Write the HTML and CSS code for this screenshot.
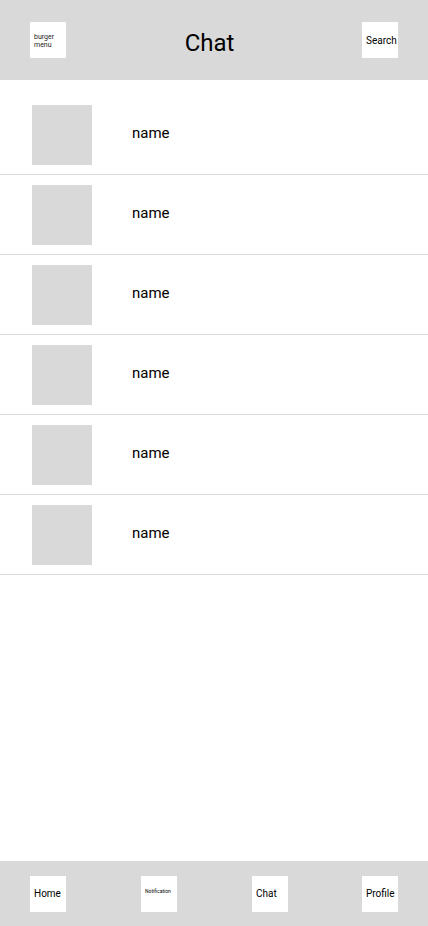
FILE: index.html
```html
<!DOCTYPE html>
<html>
<head>
<meta charset="utf-8">
<link rel="stylesheet" href="styles.css">
</head>
<body>
<div class="app">
  <header class="topbar">
    <div class="box burger">burger<br>menu</div>
    <h1 class="title">Chat</h1>
    <div class="box search">Search</div>
  </header>
  <main class="list">
    <div class="row"><div class="avatar"></div><span class="name">name</span></div>
    <div class="row"><div class="avatar"></div><span class="name">name</span></div>
    <div class="row"><div class="avatar"></div><span class="name">name</span></div>
    <div class="row"><div class="avatar"></div><span class="name">name</span></div>
    <div class="row"><div class="avatar"></div><span class="name">name</span></div>
    <div class="row"><div class="avatar"></div><span class="name">name</span></div>
  </main>
  <nav class="tabbar">
    <div class="box tab">Home</div>
    <div class="box tab notif">Notification</div>
    <div class="box tab">Chat</div>
    <div class="box tab last">Profile</div>
  </nav>
</div>
</body>
</html>
```
FILE: styles.css
```css
* { box-sizing: border-box; }
html, body { margin: 0; padding: 0; }
body { font-family: Roboto, "Noto Sans", sans-serif; color: #000; background: #fff; }
.app { width: 428px; height: 926px; display: flex; flex-direction: column; }
.topbar {
  height: 80px; background: #d9d9d9;
  display: flex; align-items: center; justify-content: space-between;
  padding: 0 30px;
}
.box {
  width: 36px; height: 36px; background: #fff; flex: none;
  display: flex; align-items: center; justify-content: flex-start;
  padding-left: 4px; white-space: nowrap;
}
.burger { font-size: 7px; line-height: 8px; padding-top: 2px; color: #222; }
.search { font-size: 10px; }
.title { margin: 6px 9px 0 0; font-weight: 400; font-size: 24px; line-height: 28px; }
.list { flex: 1; padding-top: 15px; }
.row {
  height: 80px; border-bottom: 1px solid #d9d9d9;
  display: flex; align-items: flex-start; padding: 10px 0 0 32px;
}
.avatar { width: 60px; height: 60px; background: #d9d9d9; flex: none; }
.name { font-size: 15px; line-height: 18px; margin-left: 40px; margin-top: 19px; }
.tabbar {
  height: 65px; background: #d9d9d9;
  display: flex; align-items: center;
  padding: 0 30px;
}
.tab { font-size: 10px; }
.tab + .tab { margin-left: 75px; }
.tab.last { margin-left: auto; }
.notif { font-size: 5px; align-items: flex-start; padding-top: 12px; }
```
